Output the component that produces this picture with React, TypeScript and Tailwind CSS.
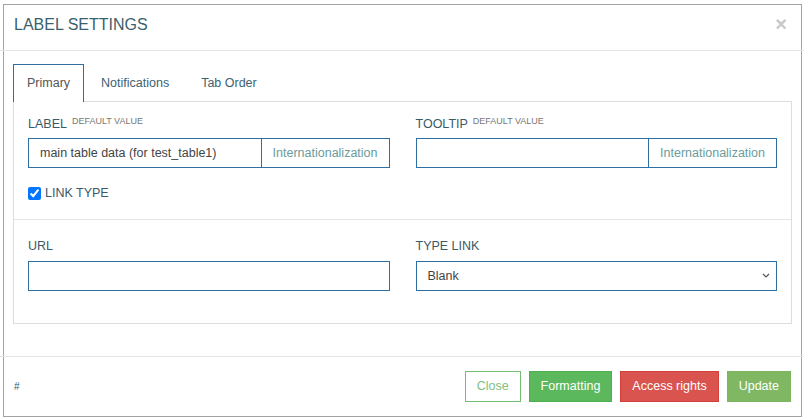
import { useState } from "react";

const labelCls = "block h-[17px] leading-[17px] text-[12.5px] text-[#3a5a66]";
const inputBorder = "border border-[#2d6ea3]";

function FieldLabel({ text, hint }: { text: string; hint?: string }) {
  return (
    <label className={labelCls}>
      {text}
      {hint && <sup className="ml-[5px] text-[9px] text-[#777]">{hint}</sup>}
    </label>
  );
}

function I18nInput({ value }: { value: string }) {
  return (
    <div className={`mt-[5px] flex h-[30px] ${inputBorder}`}>
      <input
        type="text"
        defaultValue={value}
        className="min-w-0 flex-1 bg-white px-[11px] text-[12.5px] text-[#444] outline-none"
      />
      <span className="flex items-center border-l border-[#2d6ea3] px-[11px] text-[12.5px] text-[#6a9c9c]">
        Internationalization
      </span>
    </div>
  );
}

const tabs = ["Primary", "Notifications", "Tab Order"];

export default function App() {
  const [tab, setTab] = useState("Primary");

  return (
    <div className="h-[419px] w-[804px] bg-white pl-[3px] pt-[4px] font-['Liberation_Sans',Arial,sans-serif]">
      <div className="flex h-[413px] w-[799px] flex-col border border-[#a2a2a2] bg-white">
        {/* header */}
        <div className="flex h-[45px] items-start justify-between px-[10px] pt-[9px]">
          <h4 className="text-[16px] leading-[22px] text-[#3a5f6d]">LABEL SETTINGS</h4>
          <button className="mr-[4px] mt-[-1px] text-[20px] font-bold leading-[22px] text-[#c8c8c8]">
            ×
          </button>
        </div>
        <div className="-mx-[4px] h-px bg-[#e5e5e5]" />

        {/* body */}
        <div className="h-[305px] px-[9px] pt-[13px]">
          <ul className="flex h-[38px] border-b border-[#ddd]">
            {tabs.map((t) => (
              <li
                key={t}
                onClick={() => setTab(t)}
                className={`mr-[2px] -mb-px flex h-[38px] cursor-pointer items-center text-[12.5px] ${
                  tab === t
                    ? "border border-b-0 border-[#2d6ea3] bg-white px-[13px] text-[#555]"
                    : "px-[15px] text-[#3d6272]"
                }`}
              >
                {t}
              </li>
            ))}
          </ul>

          <div className="h-[222px] border-x border-b border-[#ddd]">
            <div className="grid grid-cols-2 gap-x-[26px] border-b border-[#e5e5e5] px-[14px] pt-[14px] pb-[17px]">
              <div>
                <FieldLabel text="LABEL" hint="DEFAULT VALUE" />
                <I18nInput value="main table data (for test_table1)" />
                <label className="mt-[17px] flex h-[17px] items-center gap-[4px] text-[12.5px] text-[#3a5a66]">
                  <input type="checkbox" defaultChecked className="m-0 h-[13px] w-[13px]" />
                  LINK TYPE
                </label>
              </div>
              <div>
                <FieldLabel text="TOOLTIP" hint="DEFAULT VALUE" />
                <I18nInput value="" />
              </div>
            </div>

            <div className="grid grid-cols-2 gap-x-[26px] px-[14px] pt-[18px]">
              <div>
                <FieldLabel text="URL" />
                <input
                  type="text"
                  className={`mt-[6px] block h-[30px] w-full bg-white px-[11px] text-[12.5px] outline-none ${inputBorder}`}
                />
              </div>
              <div>
                <FieldLabel text="TYPE LINK" />
                <div className="relative mt-[6px]">
                  <select
                    defaultValue="Blank"
                    className={`block h-[30px] w-full appearance-none bg-white px-[11px] text-[12.5px] text-[#444] outline-none ${inputBorder}`}
                  >
                    <option>Blank</option>
                    <option>Self</option>
                  </select>
                  <svg
                    className="pointer-events-none absolute right-[7px] top-[12px]"
                    width="8"
                    height="5"
                    viewBox="0 0 8 5"
                    fill="none"
                  >
                    <path d="M1 1l3 3 3-3" stroke="#555" strokeWidth="1.2" />
                  </svg>
                </div>
              </div>
            </div>
          </div>
        </div>
        <div className="-mx-[4px] h-px bg-[#e5e5e5]" />

        {/* footer */}
        <div className="flex flex-1 items-center justify-between px-[10px] pb-[1px]">
          <span className="text-[10px] text-[#3a5a66]">#</span>
          <div className="flex gap-[8px]">
            <button className="h-[31px] border border-[#74bd74] bg-white px-[11px] text-[12.5px] text-[#80c080]">
              Close
            </button>
            <button className="h-[31px] border border-[#4fae4f] bg-[#5cb85c] px-[11px] text-[12.5px] text-white">
              Formatting
            </button>
            <button className="h-[31px] border border-[#d43f3a] bg-[#d9534f] px-[11px] text-[12.5px] text-white">
              Access rights
            </button>
            <button className="h-[31px] border border-[#7db560] bg-[#80b762] px-[11px] text-[12.5px] text-white">
              Update
            </button>
          </div>
        </div>
      </div>
    </div>
  );
}
